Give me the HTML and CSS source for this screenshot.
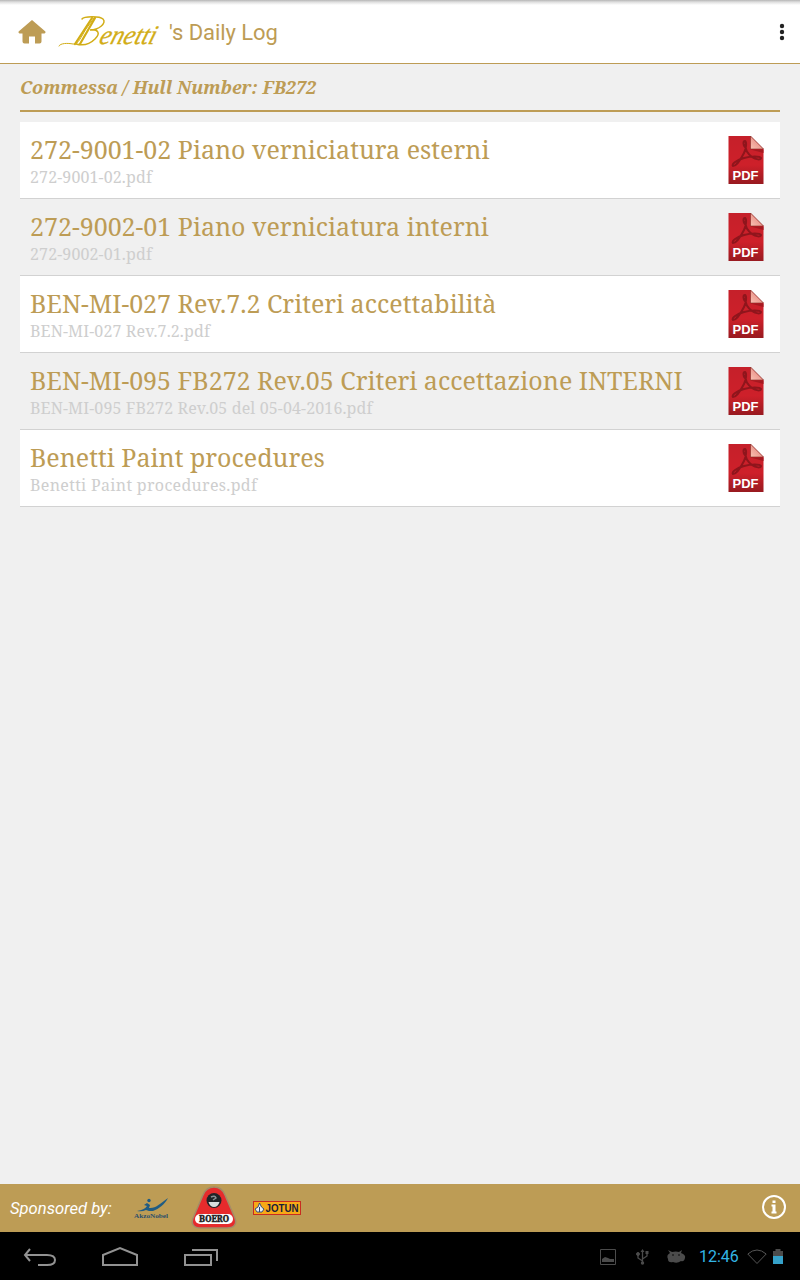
FILE: index.html
```html
<!DOCTYPE html>
<html lang="it">
<head>
<meta charset="utf-8">
<title>Benetti's Daily Log</title>
<link rel="stylesheet" href="styles.css">
</head>
<body>
<svg class="defs" width="0" height="0">
  <defs>
    <linearGradient id="red" x1="0" y1="0" x2="0" y2="1"><stop offset="0" stop-color="#c5202a"/><stop offset=".6" stop-color="#ce202a"/><stop offset="1" stop-color="#981a20"/></linearGradient>
    <linearGradient id="fold" x1="0" y1="1" x2="1" y2="0"><stop offset="0" stop-color="#f9c0b2"/><stop offset="1" stop-color="#df7770"/></linearGradient>
    <symbol id="pdf" viewBox="0 0 36 48">
      <path d="M.5 0H22.500L35.500 13V48H.5Z" fill="url(#red)"/>
      <path d="M22.500 0 35.500 13H22.500Z" fill="url(#fold)" stroke="#7e2620" stroke-width=".6"/>
      <path d="M22.500 13.500H35.500V17Z" fill="#a51920"/>
      <path d="M17 11C15 9 15 5 17 5c2 1 1 8-1 12C13 23 8 30 5 30c-2-2 4-6 11-8 7-2 16-2 17 0 0 2-5 2-9-1-4-3-7-7-7-13" fill="none" stroke="#8f151c" stroke-width="2"/>
      <text x="4.500" y="43.500" textLength="26" lengthAdjust="spacingAndGlyphs" class="pdf-label">PDF</text>
    </symbol>
  </defs>
</svg>
<header class="topbar">
  <svg class="home" width="28" height="26" viewBox="0 0 28 26"><path d="M14 1 .6 12.500Q0 14 1.500 14.500H4.500V22.500Q4.500 24.500 6.500 24.500H11V17.500H17V24.500H21.500Q23.500 24.500 23.500 22.500V14.500H26.500Q28 14 27.400 12.500Z" fill="#bd9c55"/></svg>
  <svg class="brand" width="104" height="36" viewBox="0 0 104 36">
    <g fill="none" stroke="#d2ad16" stroke-linecap="round">
      <path d="M2 32C3 29 11 29 16 30 21 31 24 23 29 15L37 4" stroke-width="1"/>
      <path d="M18 30 35 4M23 30 38 4" stroke-width="2.200"/>
      <path d="M25 5C27 2 43 2 46 5 50 9 42 16 33 16 41 15 44 19 38 25 33 30 26 32 19 30" stroke-width="1.500"/>
    </g>
    <text transform="translate(41 30) skewX(-18)" textLength="56" lengthAdjust="spacingAndGlyphs" class="brand-text">enetti</text>
  </svg>
  <h1 class="title">'s Daily Log</h1>
  <svg class="more" width="6" height="18" viewBox="0 0 6 18" fill="#222"><circle cx="3" cy="3" r="2.200"/><circle cx="3" cy="9" r="2.200"/><circle cx="3" cy="15" r="2.200"/></svg>
</header>
<main class="content">
  <h2 class="hull">Commessa / Hull Number: FB272</h2>
  <ul class="files">
    <li class="file"><div><p class="name">272-9001-02 Piano verniciatura esterni</p><p class="path">272-9001-02.pdf</p></div><svg class="pdf"><use href="#pdf"/></svg></li>
    <li class="file"><div><p class="name">272-9002-01 Piano verniciatura interni</p><p class="path">272-9002-01.pdf</p></div><svg class="pdf"><use href="#pdf"/></svg></li>
    <li class="file"><div><p class="name">BEN-MI-027 Rev.7.2 Criteri accettabilità</p><p class="path">BEN-MI-027 Rev.7.2.pdf</p></div><svg class="pdf"><use href="#pdf"/></svg></li>
    <li class="file"><div><p class="name">BEN-MI-095 FB272 Rev.05 Criteri accettazione INTERNI</p><p class="path">BEN-MI-095 FB272 Rev.05 del 05-04-2016.pdf</p></div><svg class="pdf"><use href="#pdf"/></svg></li>
    <li class="file"><div><p class="name">Benetti Paint procedures</p><p class="path words">Benetti Paint procedures.pdf</p></div><svg class="pdf"><use href="#pdf"/></svg></li>
  </ul>
</main>
<footer class="sponsors">
  <span class="by">Sponsored by:</span>
  <svg class="akzo" width="36" height="24" viewBox="0 0 36 24">
    <path d="M3 14C8 13 11 12 13 9L10 8 13 6 16 8 15 11C21 12 27 6 34 1 31 7 25 12 19 14L15 14 12 13Q8 15 3 14Z" fill="#205c83"/><circle cx="15" cy="3.500" r="1.700" fill="#205c83"/>
    <text x="0" y="20.500" textLength="34" lengthAdjust="spacingAndGlyphs" class="akzo-text">AkzoNobel</text>
  </svg>
  <svg class="boero" width="46" height="44" viewBox="0 0 46 44">
    <path d="M23 1C29 1 32 4 34 9L43.500 31C47 39 42 42 36 42H10C3 42 -1 38 2.500 31L12 9C14 4 17 1 23 1Z" fill="#e62b2c" stroke="#a48c66" stroke-width="1.500"/>
    <circle cx="23" cy="14.500" r="7.500" fill="#202427"/><path d="M17.500 16H28.500Q27 21 23 21T17.500 16Z" fill="#d8dddd"/><path d="M20 11Q24 9 25 12L22 14" stroke="#8a9193" fill="none" stroke-width="1.500"/>
    <rect x="4" y="28" width="38" height="10" rx="5" fill="#fff"/>
    <text x="8" y="36" textLength="30" lengthAdjust="spacingAndGlyphs" class="boero-text">BOERO</text>
  </svg>
  <svg class="jotun" width="48" height="14" viewBox="0 0 48 14">
    <rect x=".5" y=".5" width="47" height="13" fill="#f7a916" stroke="#c82c20"/>
    <path d="M6.500 2 8.500 6 11 8 9 11H4L2 8 5 6Z" fill="#e9edf0" stroke="#27447a" stroke-width=".9"/><path d="M6.500 6V11" stroke="#27447a"/>
    <text x="12.500" y="11" textLength="33" lengthAdjust="spacingAndGlyphs" class="jotun-text">JOTUN</text>
  </svg>
  <svg class="info" width="26" height="26" viewBox="0 0 26 26"><circle cx="13" cy="13" r="11" fill="none" stroke="#fff" stroke-width="2"/><path d="M11.500 6.500H14.500V9H11.500ZM10.500 10.500H14.500V17.500H15.500V19.500H10.500V17.500H11.500V12.500H10.500Z" fill="#fff"/></svg>
</footer>
<nav class="system">
  <svg class="nav-icons" width="200" height="24" viewBox="0 0 200 24" fill="none" stroke="#929292" stroke-width="2">
    <path d="M10 3 5 9 10 15M5 9H27Q35 9 35 14T27 19H18"/>
    <path d="M83 19V9L100 2 117 9V19Z"/>
    <path d="M165 9H191V19H165ZM172 4H197V15"/>
  </svg>
  <svg class="status-icons" width="88" height="20" viewBox="0 0 88 20" fill="none" stroke="#4b4b4b">
    <path d="M.5 2.500H15.500V17.500H.5Z"/><path d="M2 15V12L5 10 8 11 10 12 14 12V15Z" fill="#4b4b4b" stroke="none"/>
    <path d="M42.500 4V17M42.500 14 38 11V7M42.500 12 47 9V6" stroke-width="1.300"/><path d="M40.500 5 42.500 2 44.500 5ZM45.500 4H48.500V7H45.500Z" fill="#4b4b4b" stroke="none"/><circle cx="38" cy="7" r="1.500" fill="#4b4b4b"/><circle cx="42.500" cy="16" r="1.700" fill="#4b4b4b" stroke="none"/>
    <path d="M70 6 68 3 72 5Q76 4 79 5L82 3 81 6Q86 8 85 11 84 15 81 14 77 17 73 15 68 16 68 12 66 8 70 6Z" fill="#4b4b4b" stroke="none"/><circle cx="73" cy="8" r=".8" fill="#000" stroke="none"/><circle cx="79" cy="8" r=".8" fill="#000" stroke="none"/>
  </svg>
  <time class="clock">12:46</time>
  <svg class="signal" width="38" height="18" viewBox="0 0 38 18"><path d="M.8 6Q10 -2 19.200 6L10 15.500Z" fill="none" stroke="#555"/><path d="M26 3H28.500V1H33.500V3H36V8H26Z" fill="#4b4b4b"/><path d="M26 8H36V16H26Z" fill="#35a1c9"/></svg>
</nav>
</body>
</html>
```
FILE: styles.css
```css
* { box-sizing: border-box; }
body { margin: 0; width: 800px; height: 1280px; display: flex; flex-direction: column; background: #f0f0f0; font-family: Roboto, sans-serif; overflow: hidden; }
svg { display: block; flex: none; overflow: visible; }
.defs { position: absolute; }
h1, h2, p, ul { margin: 0; padding: 0; font-weight: 400; }
.topbar { height: 64px; flex: none; display: flex; align-items: center; padding: 1px 15px 0 18px; background: #fff linear-gradient(#b5b5b5, #dedede 2px, #fff 5px) no-repeat; border-bottom: 1px solid #bd9c55; }
.brand { margin-left: 11px; }
.brand-text { font: italic 27px "Liberation Serif", serif; fill: #d2ad16; stroke: #d2ad16; stroke-width: .3; }
.title { margin: 2px 0 0 8px; font-size: 22px; line-height: 28px; letter-spacing: -.05px; color: #bd9c55; }
.more { margin-left: auto; }
.content { flex: 1; padding: 0 20px; }
.hull { height: 48px; border-bottom: 2px solid #bd9c55; color: #bd9c55; font: italic bold 18px/46px "Noto Serif", "DejaVu Serif Condensed", "DejaVu Serif", serif; white-space: nowrap; }
.files { margin-top: 10px; list-style: none; }
.file { height: 77px; display: flex; justify-content: space-between; padding: 13px 16px 0 10px; border-bottom: 1px solid #d2d2d2; background: #fff; }
.file:nth-child(even) { background: #f0f0f0; }
.name, .path { font-family: "Noto Serif", "DejaVu Serif Condensed", "DejaVu Serif", serif; white-space: nowrap; }
.name { font-size: 25px; line-height: 29px; color: #bd9c55; }
.path { margin-top: 1px; font-size: 16px; line-height: 24px; letter-spacing: .13px; color: #cecece; }
.words { letter-spacing: .32px; }
.pdf { width: 36px; height: 48px; margin-top: 1px; }
.pdf-label { font: bold 13px "Liberation Sans", sans-serif; fill: #fff; }
.sponsors { height: 48px; flex: none; display: flex; align-items: center; padding: 0 13px 0 10px; background: #bd9c55; }
.by { width: 124px; color: #fff; font-size: 16.600px; font-style: italic; white-space: nowrap; }
.akzo { margin-top: 2px; }
.akzo-text { font: bold 7px "Liberation Serif", serif; fill: #2d506b; }
.boero { margin-left: 21px; }
.boero-text { font: bold 8.500px "DejaVu Serif", serif; fill: #202020; stroke: #202020; stroke-width: .5; }
.jotun { margin-left: 16px; }
.jotun-text { font: bold 10.500px "Liberation Sans", sans-serif; fill: #17203a; }
.info { margin-left: auto; margin-top: -2px; }
.system { height: 48px; flex: none; display: flex; align-items: center; padding: 0 15px 0 20px; background: #000; }
.nav-icons { margin-top: 4px; }
.status-icons { margin-left: 380px; margin-top: 2px; }
.clock { margin-left: 11px; width: 44px; color: #33b5e5; font-size: 16px; }
.signal { margin-left: 4px; margin-top: 1px; }
```
